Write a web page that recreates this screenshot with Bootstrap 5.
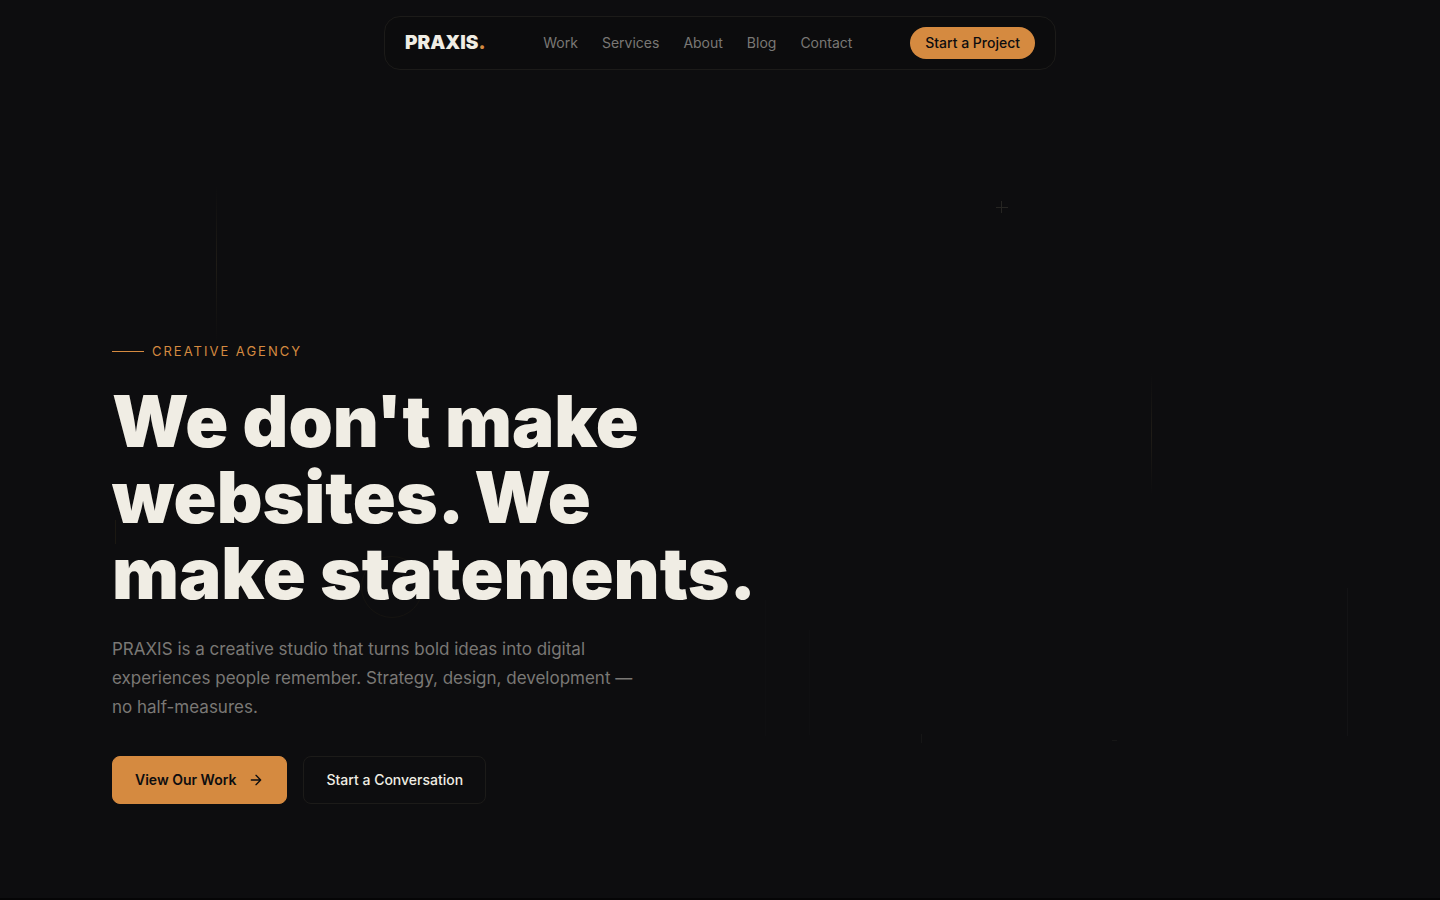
<!DOCTYPE html>
<html lang="en">
<head>
<meta charset="utf-8">
<meta name="viewport" content="width=device-width, initial-scale=1">
<title>PRAXIS. Creative Agency</title>
<link href="https://cdn.jsdelivr.net/npm/bootstrap@5.3.0/dist/css/bootstrap.min.css" rel="stylesheet">
<style>
  :root {
    --ink: #0d0d0f;
    --cream: #f0ede4;
    --amber: #d58a40;
    --ash: #7a7875;
    --hair: #1c1b19;
  }
  body {
    background: var(--ink);
    color: var(--cream);
    font-family: Inter, "Liberation Sans", sans-serif;
    font-size: 14px;
  }
  .site-bar {
    width: calc(100% - 32px);
    max-width: 672px;
    min-height: 54px;
    margin-top: 16px;
    padding: 0 20px;
    border: 1px solid var(--hair);
    border-radius: 16px;
    background: #0c0c0d;
  }
  .brand {
    font-size: 19px;
    line-height: 28px;
    font-weight: 900;
    color: var(--cream);
  }
  .brand span { color: var(--amber); }
  .site-links { gap: 24px; }
  .site-links a { color: var(--ash); line-height: 20px; }
  .cta-pill {
    --bs-btn-color: #0d0d0f;
    --bs-btn-bg: var(--amber);
    --bs-btn-hover-bg: #e09a54;
    --bs-btn-font-size: 14px;
    --bs-btn-font-weight: 500;
    --bs-btn-padding-x: 15px;
    --bs-btn-padding-y: 6px;
    --bs-btn-border-width: 0;
    line-height: 20px;
  }
  .hero { min-height: calc(100vh - 2px); padding-bottom: 94px; }
  .hero-inner { max-width: 1280px; padding: 0 32px; }
  .eyebrow {
    color: var(--amber);
    font-size: 13px;
    line-height: 17px;
    letter-spacing: 2px;
    gap: 8px;
    margin-bottom: 23px;
  }
  .eyebrow i { width: 32px; height: 1px; background: var(--amber); }
  .headline {
    font-size: 71px;
    line-height: 76px;
    font-weight: 900;
    max-width: 660px;
    margin-bottom: 24px;
  }
  .pitch {
    color: var(--ash);
    font-size: 17px;
    line-height: 29px;
    max-width: 540px;
    margin-bottom: 34px;
  }
  .act {
    --bs-btn-font-size: 14px;
    --bs-btn-font-weight: 500;
    --bs-btn-padding-x: 22px;
    --bs-btn-padding-y: 13px;
    --bs-btn-border-radius: 8px;
    line-height: 20px;
  }
  .act-main {
    --bs-btn-font-weight: 600;
    --bs-btn-color: #0d0d0f;
    --bs-btn-bg: var(--amber);
    --bs-btn-border-color: var(--amber);
    --bs-btn-hover-bg: #e09a54;
    gap: 12px;
  }
  .act-ghost {
    --bs-btn-color: var(--cream);
    --bs-btn-border-color: var(--hair);
    --bs-btn-hover-color: var(--cream);
    --bs-btn-hover-border-color: var(--ash);
  }
  .backdrop { pointer-events: none; }
  .end-rule { height: 2px; background: #050506; }
</style>
</head>
<body>
<header class="position-absolute top-0 start-0 w-100 d-flex justify-content-center z-3">
  <nav class="site-bar d-flex align-items-center justify-content-between" aria-label="Main">
    <a class="brand text-decoration-none" href="#">PRAXIS<span>.</span></a>
    <div class="site-links d-flex">
      <a class="text-decoration-none" href="#work">Work</a>
      <a class="text-decoration-none" href="#services">Services</a>
      <a class="text-decoration-none" href="#about">About</a>
      <a class="text-decoration-none" href="#blog">Blog</a>
      <a class="text-decoration-none" href="#contact">Contact</a>
    </div>
    <button type="button" class="btn cta-pill rounded-pill">Start a Project</button>
  </nav>
</header>
<main>
  <section class="hero position-relative d-flex flex-column justify-content-end">
    <svg class="backdrop position-absolute top-0 start-0 w-100 h-100" viewBox="0 0 1440 898" preserveAspectRatio="xMidYMid slice" fill="none" aria-hidden="true">
      <defs>
        <linearGradient id="fade" x1="0" y1="0" x2="0" y2="1">
          <stop offset="0" stop-color="#1f1c17" stop-opacity="0"/>
          <stop offset=".5" stop-color="#1f1c17"/>
          <stop offset="1" stop-color="#1f1c17" stop-opacity="0"/>
        </linearGradient>
      </defs>
      <rect x="216" y="184" width="1" height="160" fill="url(#fade)"/>
      <rect x="1151" y="374" width="1" height="120" fill="url(#fade)"/>
      <path d="M1001.500 201v12M996 207.500h12" stroke="#262522"/>
      <path d="M115.500 520v24" stroke="#1b1812"/>
      <circle cx="392" cy="587" r="30.500" stroke="#161411"/>
      <path d="M765.500 600v136M809.500 630v105" stroke="#0f0f11"/>
      <path d="M1347.500 588v148" stroke="#131315"/>
      <path d="M921.500 734v9M1112 740.500h5" stroke="#161616"/>
    </svg>
    <div class="hero-inner position-relative w-100 mx-auto">
      <p class="eyebrow d-flex align-items-center text-uppercase"><i></i>Creative Agency</p>
      <h1 class="headline">We don't make websites. We make statements.</h1>
      <p class="pitch">PRAXIS is a creative studio that turns bold ideas into digital experiences people remember. Strategy, design, development — no half-measures.</p>
      <div class="d-flex flex-wrap gap-3">
        <button type="button" class="btn act act-main d-inline-flex align-items-center">View Our Work
          <svg width="16" height="16" viewBox="0 0 24 24" fill="none" stroke="currentColor" stroke-width="2" stroke-linecap="round" stroke-linejoin="round" aria-hidden="true"><path d="M5 12h14M12 5l7 7-7 7"/></svg>
        </button>
        <button type="button" class="btn act act-ghost">Start a Conversation</button>
      </div>
    </div>
  </section>
  <div class="end-rule"></div>
</main>
<script src="https://cdn.jsdelivr.net/npm/bootstrap@5.3.0/dist/js/bootstrap.bundle.min.js"></script>
</body>
</html>
